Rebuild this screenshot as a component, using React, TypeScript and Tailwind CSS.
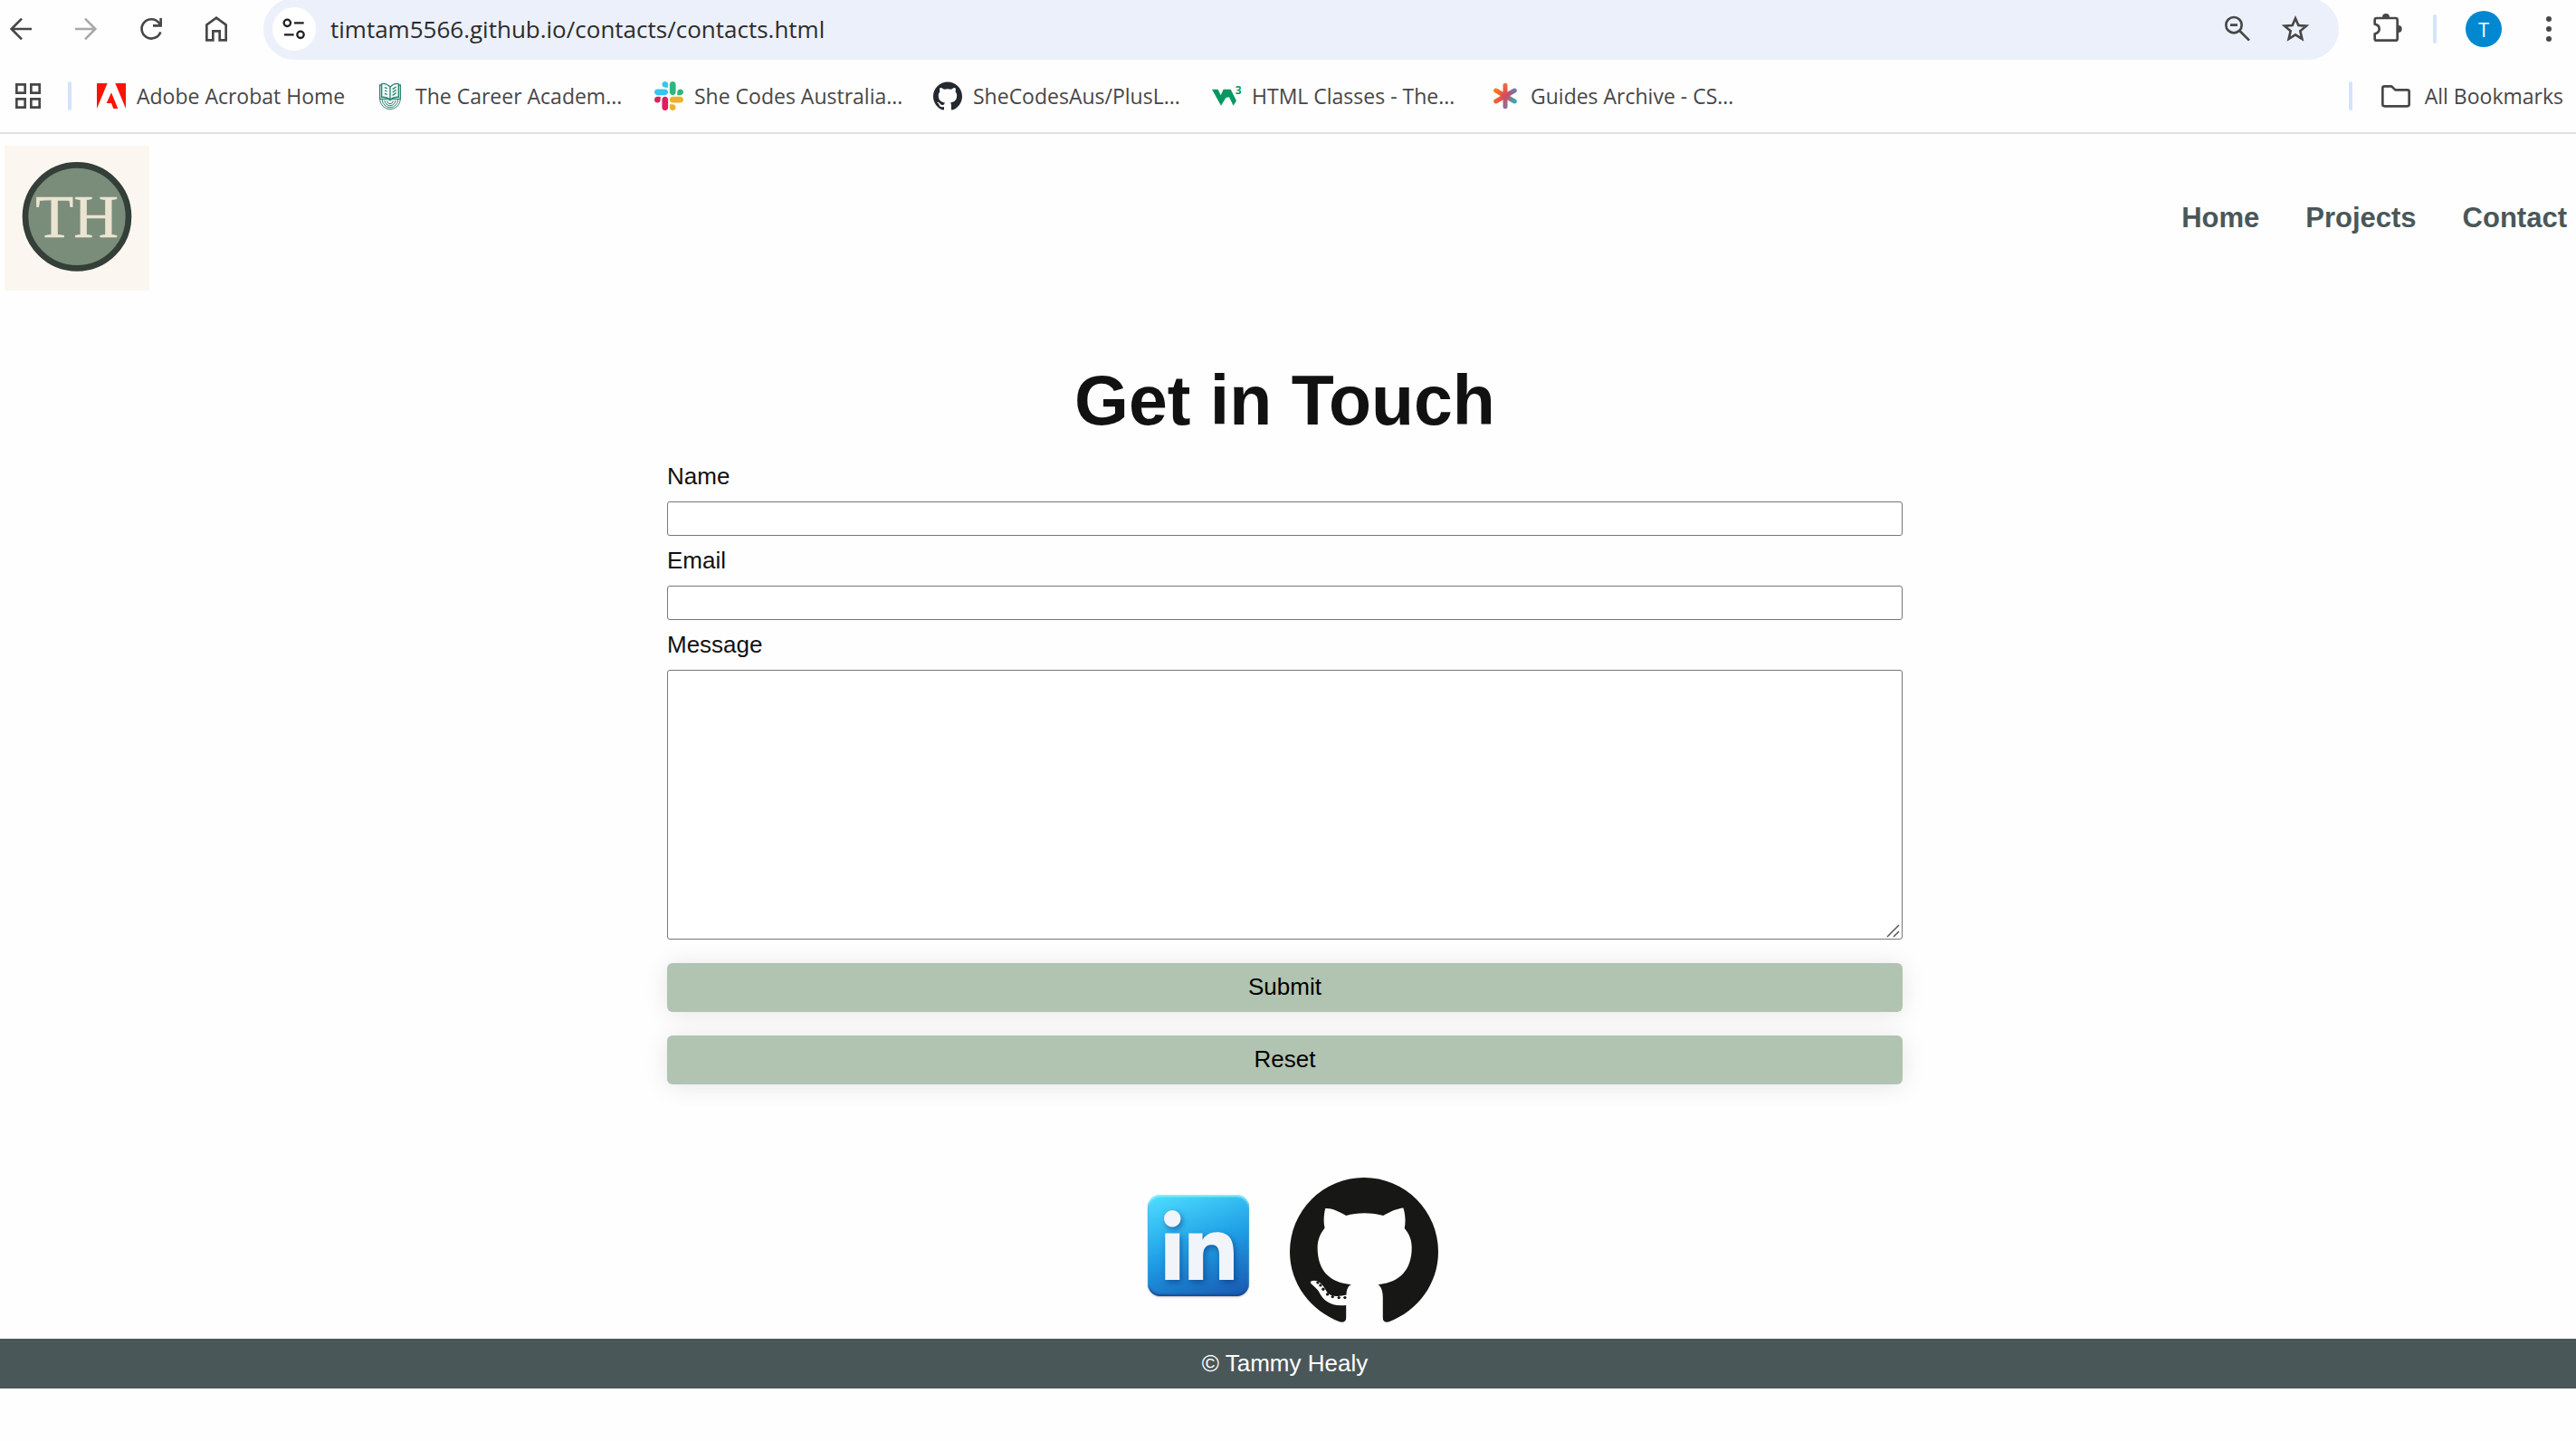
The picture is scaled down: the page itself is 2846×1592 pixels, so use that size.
import type { ReactNode } from "react";
import { FaLinkedinIn } from "react-icons/fa";
import { SiGithub } from "react-icons/si";

const stroke = { fill: "none", stroke: "currentColor", strokeWidth: 8 };

function BackIcon() {
  return (
    <svg viewBox="0 0 108 108" className="size-9" {...stroke}>
      <path d="M90 54H22M57 20L23 54L57 88" />
    </svg>
  );
}

function ForwardIcon() {
  return (
    <svg viewBox="0 0 108 108" className="size-9 text-[#a9a9a9]" {...stroke}>
      <path d="M18 54H86M51 20L85 54L51 88" />
    </svg>
  );
}

function ReloadIcon() {
  return (
    <svg viewBox="0 0 108 108" className="size-9" {...stroke}>
      <path d="M85 64A32 32 0 1 1 80 34L86 43" />
      <path d="M86 18V43H60" />
    </svg>
  );
}

function HomeIcon() {
  return (
    <svg viewBox="0 0 108 108" className="size-9" {...stroke}>
      <path d="M22 91V40L54 17L86 40V91H65V61H43V91Z" />
    </svg>
  );
}

function TuneIcon() {
  return (
    <svg viewBox="0 0 108 108" className="size-9" {...stroke} strokeWidth={7}>
      <circle cx="31" cy="34" r="11" />
      <path d="M54 34H86M21 73H53" />
      <circle cx="75" cy="73" r="11" />
    </svg>
  );
}

function ZoomOutIcon() {
  return (
    <svg viewBox="0 0 108 108" className="size-9" {...stroke}>
      <circle cx="42" cy="41" r="26" />
      <path d="M30 41H54M61 60L93 92" />
    </svg>
  );
}

function StarIcon() {
  return (
    <svg viewBox="0 0 108 108" className="size-9" {...stroke}>
      <path d="M54 19L64 42L90 44L70 61L76 87L54 73L32 87L38 61L18 44L44 42Z" />
    </svg>
  );
}

function PuzzleIcon() {
  return (
    <svg viewBox="0 0 108 108" className="size-9" {...stroke}>
      <path
        strokeLinejoin="round"
        d="M17 18Q11 18 11 24V38C20 40 26 46 26 54C26 62 20 68 11 70V86Q11 92 17 92H80Q86 92 86 86V24Q86 18 80 18Z"
      />
      <path stroke="none" fill="currentColor" d="M36 15A12 12 0 0 1 60 15ZM89 42A12 12 0 0 1 89 66Z" />
    </svg>
  );
}

function MoreIcon() {
  return (
    <svg viewBox="0 0 108 108" className="size-9" fill="currentColor">
      <circle cx="54" cy="21" r="9" />
      <circle cx="54" cy="54" r="9" />
      <circle cx="54" cy="87" r="9" />
    </svg>
  );
}

function AppsIcon() {
  return (
    <svg viewBox="0 0 84 84" className="size-7" {...stroke}>
      <path d="M4 4H32V32H4ZM52 4H80V32H52ZM4 52H32V80H4ZM52 52H80V80H52Z" />
    </svg>
  );
}

function FolderIcon() {
  return (
    <svg viewBox="0 0 96 96" className="size-8" {...stroke} strokeLinejoin="round">
      <path d="M10 16H34L46 28H86Q92 28 92 34V76Q92 82 86 82H10Q4 82 4 76V22Q4 16 10 16Z" />
    </svg>
  );
}

function AdobeIcon() {
  return (
    <svg viewBox="0 0 96 96" className="size-8" fill="#fa1400">
      <path d="M0 6H35L0 90ZM61 6H96V90ZM48 37L70 90H55L48 72H32Z" />
    </svg>
  );
}

function CareerIcon() {
  return (
    <svg viewBox="0 0 96 96" className="size-8" fill="none" stroke="#2b8572" strokeWidth="4">
      <path fill="#f4f9f8" d="M48 18Q34 4 20 8V52Q36 50 48 60Q60 50 76 52V8Q62 4 48 18V60" />
      <path d="M20 12H14V58H34Q44 58 48 62Q52 58 62 58H82V12H76" />
      <path d="M30 20L38 23M30 30L38 33M30 40L38 43M56 26L68 18M56 36L68 28M56 46L68 38" />
      <path strokeWidth="3" d="M14 58A34 34 0 0 0 82 58M22 60A26 26 0 0 0 74 60M30 62A18 18 0 0 0 66 62M38 64A10 10 0 0 0 58 64" />
    </svg>
  );
}

const slackArm =
  "M25.8 77.6c0 7.1-5.8 12.9-12.9 12.9S0 84.7 0 77.6s5.8-12.9 12.9-12.9h12.9v12.9zm6.5 0c0-7.1 5.8-12.9 12.9-12.9s12.9 5.8 12.9 12.9v32.3c0 7.1-5.8 12.9-12.9 12.9s-12.9-5.8-12.9-12.9V77.6z";

function SlackIcon() {
  return (
    <svg viewBox="0 0 122.8 122.8" className="size-8">
      <path d={slackArm} fill="#e01e5a" />
      <path d={slackArm} fill="#36c5f0" transform="rotate(90 61.4 61.4)" />
      <path d={slackArm} fill="#2eb67d" transform="rotate(180 61.4 61.4)" />
      <path d={slackArm} fill="#ecb22e" transform="rotate(270 61.4 61.4)" />
    </svg>
  );
}

function W3Icon() {
  return (
    <svg viewBox="0 0 96 96" className="size-8" fill="#059862">
      <path d="M0 26H20L29 46L38 26H62L81 64L71 80L57 52L46 54L30 80Z" />
      <text x="77" y="42" fontSize="36" fontWeight="700" fontFamily="Open Sans, sans-serif">
        3
      </text>
    </svg>
  );
}

function CssTricksIcon() {
  return (
    <svg viewBox="0 0 96 96" className="size-8" strokeWidth="15" strokeLinecap="round">
      <defs>
        <linearGradient id="ct-a" gradientUnits="userSpaceOnUse" x1="16" y1="30" x2="80" y2="66">
          <stop offset="0" stopColor="#ff7a18" />
          <stop offset="0.5" stopColor="#d9475f" />
          <stop offset="1" stopColor="#31adb8" />
        </linearGradient>
        <linearGradient id="ct-b" gradientUnits="userSpaceOnUse" x1="16" y1="66" x2="80" y2="30">
          <stop offset="0" stopColor="#f6632f" />
          <stop offset="0.6" stopColor="#cf4569" />
          <stop offset="1" stopColor="#6c809f" />
        </linearGradient>
        <linearGradient id="ct-c" gradientUnits="userSpaceOnUse" x1="48" y1="10" x2="48" y2="86">
          <stop offset="0" stopColor="#f26a3a" />
          <stop offset="0.5" stopColor="#d9475f" />
          <stop offset="1" stopColor="#8a7496" />
        </linearGradient>
      </defs>
      <path d="M17 30L79 66" stroke="url(#ct-a)" />
      <path d="M17 66L79 30" stroke="url(#ct-b)" />
      <path d="M48 13V83" stroke="url(#ct-c)" />
    </svg>
  );
}

function Logo() {
  return (
    <svg viewBox="0 0 480 480" className="size-40" role="img" aria-label="TH">
      <rect width="480" height="480" fill="#fbf7f0" />
      <circle cx="240" cy="235" r="171" fill="#7a8c7a" stroke="#333f38" strokeWidth="20" />
      <text
        x="240"
        y="303"
        textAnchor="middle"
        fontSize="206"
        fontFamily="Liberation Serif, serif"
        fill="#ece4d3"
        stroke="#ece4d3"
        strokeWidth="2"
      >
        TH
      </text>
    </svg>
  );
}

const suckers = [
  [708, 441], [717, 450], [726, 463], [740, 480], [757, 488], [778, 491], [798, 491],
];

function OctocatLogo() {
  return (
    <svg viewBox="615 93 493 480" className="h-[160px] w-[164px]" fill="#171715">
      <path d="M780 571Q802 577 802 558V516C752 522 726 500 713 474C706 460 692 453 684 443C681 435 694 432 706 436C722 443 729 457 738 472C750 489 778 489 803 482C803 466 808 452 819 448C745 441 707 400 707 325C707 300 715 280 731 260C726 240 728 215 733 195C752 193 775 203 802 219C840 208 885 208 925 219C952 203 972 195 992 193C999 215 1000 240 996 261C1012 280 1020 300 1020 325C1020 400 980 441 908 448C919 455 924 470 924 490V558Q924 577 945 571C1040 535 1108 445 1108 339A246 246 0 0 0 615 339C615 445 685 535 780 571Z" />
      {suckers.map(([x, y]) => (
        <circle key={x} cx={x} cy={y} r="5" />
      ))}
    </svg>
  );
}

function IconButton({ label, children }: { label: string; children: ReactNode }) {
  return (
    <button type="button" aria-label={label} className="shrink-0">
      {children}
    </button>
  );
}

function Divider() {
  return <div className="h-8 w-1 shrink-0 rounded-full bg-[#d3e3fd]" />;
}

const bookmarks = [
  { label: "Adobe Acrobat Home", icon: <AdobeIcon /> },
  { label: "The Career Academ...", icon: <CareerIcon /> },
  { label: "She Codes Australia...", icon: <SlackIcon /> },
  { label: "SheCodesAus/PlusL...", icon: <SiGithub className="size-8 text-[#24292f]" /> },
  { label: "HTML Classes - The...", icon: <W3Icon /> },
  { label: "Guides Archive - CS...", icon: <CssTricksIcon /> },
];

function BrowserBar() {
  return (
    <div className="border-b-2 border-[#e1e1e1] font-['Open_Sans',sans-serif] text-[#474747]">
      <div className="flex h-[66px] items-center pr-3 pb-0.5 pl-[5px]">
        <div className="flex gap-9">
          <IconButton label="Back"><BackIcon /></IconButton>
          <IconButton label="Forward"><ForwardIcon /></IconButton>
          <IconButton label="Reload"><ReloadIcon /></IconButton>
          <IconButton label="Home"><HomeIcon /></IconButton>
        </div>
        <div className="ml-[34px] flex h-[68px] flex-1 items-center rounded-full bg-[#ecf0fa] pr-[30px] pl-2.5">
          <button
            type="button"
            aria-label="Site information"
            className="flex size-12 shrink-0 items-center justify-center rounded-full bg-white text-[#1f1f1f]"
          >
            <TuneIcon />
          </button>
          <input
            aria-label="Address"
            defaultValue="timtam5566.github.io/contacts/contacts.html"
            className="ml-4 min-w-0 flex-1 bg-transparent text-[26px] text-[#2c2c2c] outline-none"
          />
          <div className="flex gap-7">
            <IconButton label="Zoom"><ZoomOutIcon /></IconButton>
            <IconButton label="Bookmark this page"><StarIcon /></IconButton>
          </div>
        </div>
        <div className="ml-9 flex items-center gap-8">
          <IconButton label="Extensions"><PuzzleIcon /></IconButton>
          <Divider />
          <button type="button" className="mr-0.5 size-10 rounded-full bg-[#0288d1] text-[22px] text-white">
            T
          </button>
          <IconButton label="Menu"><MoreIcon /></IconButton>
        </div>
      </div>
      <div className="flex h-20 items-center pr-[14px] pl-[17px] text-[23px]">
        <IconButton label="Apps"><AppsIcon /></IconButton>
        <div className="mr-7 ml-[30px]">
          <Divider />
        </div>
        {bookmarks.map((b) => (
          <a key={b.label} href="#" className="flex w-[308px] items-center gap-3 whitespace-nowrap">
            {b.icon}
            {b.label}
          </a>
        ))}
        <div className="ml-auto flex items-center">
          <Divider />
          <a href="#" className="ml-8 flex items-center gap-4 whitespace-nowrap">
            <FolderIcon />
            All Bookmarks
          </a>
        </div>
      </div>
    </div>
  );
}

const field = "w-full rounded-[3px] border border-[#767676] bg-white px-2 outline-none";
const action =
  "mt-[26px] h-[54px] w-full rounded-md bg-[#b1c3b1] pb-0.5 text-black shadow-[0_2px_26px_rgba(0,0,0,0.1)]";

export default function App() {
  return (
    <div className="min-h-screen bg-[#fefefe] font-['Liberation_Sans',Arial,sans-serif] text-[26px] text-[#111]">
      <BrowserBar />
      <header className="flex items-center justify-between pt-[13px] pr-2.5 pl-[5px]">
        <a href="#"><Logo /></a>
        <nav className="flex gap-[51px] text-[31px] font-bold text-[#4a5759]">
          <a href="#">Home</a>
          <a href="#">Projects</a>
          <a href="#">Contact</a>
        </nav>
      </header>
      <main className="flex flex-col items-center pr-[7px]">
        <h1 className="mt-[77px] text-[77px] leading-[88px] font-bold">Get in Touch</h1>
        <form className="mt-[25px] flex w-full max-w-[1365px] flex-col leading-[31px]">
          <label htmlFor="name">Name</label>
          <input id="name" type="text" className={`${field} mt-3 h-[38px]`} />
          <label htmlFor="email" className="mt-3">Email</label>
          <input id="email" type="email" className={`${field} mt-3 h-[38px]`} />
          <label htmlFor="message" className="mt-3">Message</label>
          <div className="relative mt-3 h-[298px]">
            <textarea id="message" className={`${field} block h-full resize-none`} />
            <svg
              viewBox="0 0 15 15"
              className="pointer-events-none absolute right-[3px] bottom-0.5 size-[15px]"
              stroke="#555"
              strokeWidth="1.5"
            >
              <path d="M1 14L14 1M8 14L14 8" />
            </svg>
          </div>
          <button type="submit" className={action}>Submit</button>
          <button type="reset" className={action}>Reset</button>
        </form>
        <div className="mt-[103px] mb-[18px] flex items-start gap-[45px] pl-[18px]">
          <a
            href="#"
            aria-label="LinkedIn"
            className="mt-[19px] flex size-28 items-start rounded-[14px] bg-linear-160 from-[#4fe0ff] via-[#1f9fe6] to-[#1a55ae] pt-[17px] pl-[18px] shadow-[inset_0_2px_2px_#8ff0ff,inset_0_-2px_2px_#174a94,0_1px_2px_rgba(0,0,0,0.25)]"
          >
            <FaLinkedinIn className="h-[88px] w-[77px] text-[#f1f4f8] drop-shadow-[2px_3px_3px_rgba(10,50,120,0.55)]" />
          </a>
          <a href="#" aria-label="GitHub"><OctocatLogo /></a>
        </div>
      </main>
      <footer className="flex h-[55px] items-center justify-center bg-[#4a5759] pr-[7px] text-white">
        © Tammy Healy
      </footer>
    </div>
  );
}
